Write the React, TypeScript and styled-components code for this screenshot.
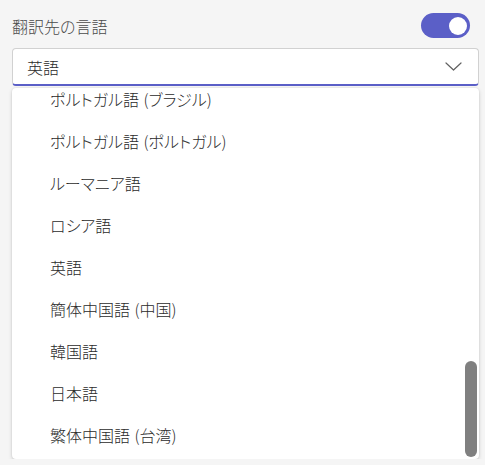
import styled, { createGlobalStyle } from 'styled-components';

const GlobalStyle = createGlobalStyle`
  body {
    margin: 0;
    background: #f5f5f5;
    font-family: "Noto Sans CJK JP", "Noto Sans", sans-serif;
    font-feature-settings: "palt";
    font-weight: 300;
  }
`;

const languages = [
  'ポルトガル語 (ブラジル)',
  'ポルトガル語 (ポルトガル)',
  'ルーマニア語',
  'ロシア語',
  '英語',
  '簡体中国語 (中国)',
  '韓国語',
  '日本語',
  '繁体中国語 (台湾)',
];

const Panel = styled.div`
  display: flex;
  flex-direction: column;
  padding: 13px 6px 0 12px;
`;

const Header = styled.div`
  display: flex;
  align-items: center;
  justify-content: space-between;
  height: 25px;
  padding-right: 9px;
`;

const Label = styled.span`
  font-size: 16px;
  color: #4a4a4a;
`;

const Switch = styled.div`
  width: 49px;
  height: 25px;
  border-radius: 13px;
  background: #5b5fc7;
  display: flex;
  align-items: center;
  justify-content: flex-end;
  padding: 0 3px;
  box-sizing: border-box;
`;

const Knob = styled.div`
  width: 18px;
  height: 18px;
  border-radius: 50%;
  background: #fff;
`;

const Select = styled.div`
  margin-top: 10px;
  height: 38px;
  box-sizing: border-box;
  background: #fff;
  border: 1px solid #d1d1d1;
  border-bottom: 2px solid #5b5fc7;
  border-radius: 4px;
  display: flex;
  align-items: center;
  justify-content: space-between;
  padding: 0 16px 0 14px;
  font-size: 16px;
  color: #2b2b2b;
`;

const Listbox = styled.div`
  position: relative;
  margin-top: 2px;
  height: 371px;
  overflow: hidden;
  background: #fff;
  border-radius: 4px;
  box-shadow: 0 0 2px rgba(0, 0, 0, 0.12), 0 2px 4px rgba(0, 0, 0, 0.14);
`;

const Options = styled.div`
  margin-top: -10px;
  display: flex;
  flex-direction: column;
`;

const Option = styled.div`
  height: 42px;
  display: flex;
  align-items: center;
  padding-left: 38px;
  font-size: 16px;
  color: #2b2b2b;
  word-spacing: 1px;
`;

const Thumb = styled.div`
  position: absolute;
  right: 2px;
  bottom: 2px;
  width: 12px;
  height: 96px;
  border-radius: 6px;
  background: #808080;
`;

export default function App() {
  return (
    <>
      <GlobalStyle />
      <Panel>
        <Header>
          <Label>翻訳先の言語</Label>
          <Switch>
            <Knob />
          </Switch>
        </Header>
        <Select>
          <span>英語</span>
          <svg width="17" height="9" viewBox="0 0 17 9" fill="none">
            <path d="M1 1l7.5 7L16 1" stroke="#616161" strokeWidth="1.2" strokeLinecap="round" strokeLinejoin="round" />
          </svg>
        </Select>
        <Listbox>
          <Options>
            {languages.map((name) => (
              <Option key={name}>{name}</Option>
            ))}
          </Options>
          <Thumb />
        </Listbox>
      </Panel>
    </>
  );
}
